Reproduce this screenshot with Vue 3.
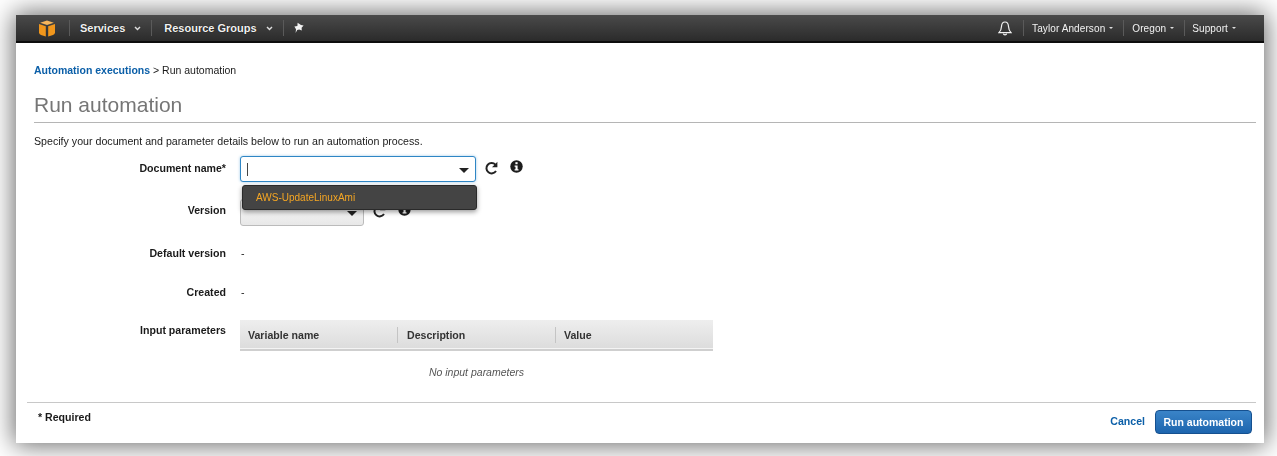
<script setup>
const navLeft = ['Services', 'Resource Groups']
const navRight = ['Taylor Anderson', 'Oregon', 'Support']
const columns = [
  { name: 'Variable name', width: 157 },
  { name: 'Description', width: 158 },
  { name: 'Value', width: 158 }
]
</script>

<template>
  <div class="stage">
    <div class="window">
      <header class="nav">
        <svg class="logo" width="18" height="17" viewBox="0 0 18 17">
          <path d="M9 .6 L15.8 2.8 L9 5 L2.2 2.8 Z" fill="#f7b65c" />
          <path d="M1 4 L7.8 6.3 V16.6 L3 15 Q1 14.3 1 12.6 Z" fill="#f0961c" />
          <path d="M17 4 L10.2 6.3 V16.6 L15 15 Q17 14.3 17 12.6 Z" fill="#f0961c" />
        </svg>
        <span class="sep first"></span>
        <template v-for="item in navLeft" :key="item">
          <span class="nav-item">{{ item }}</span>
          <svg class="chev" width="7" height="5" viewBox="0 0 7 5"><path d="M1 1 L3.5 3.6 L6 1" fill="none" stroke="#ddd" stroke-width="1.4" /></svg>
          <span class="sep"></span>
        </template>
        <svg class="pin" width="12" height="12" viewBox="0 0 12 12">
          <path d="M4.6 .8 L8 3 L10.6 3.4 L8.6 5.8 L8.8 8.6 L6.2 7.4 L4.2 8 L2.6 11 L3 7.2 L1.4 4.6 L4.4 4 Z" fill="#f2f2f2" />
        </svg>
        <div class="nav-right">
          <svg class="bell" width="14" height="15" viewBox="0 0 14 15">
            <path d="M7 1 C4.4 1 3.6 3.2 3.5 5.6 C3.4 8.2 2.8 9.8 1 11.6 H13 C11.2 9.8 10.6 8.2 10.5 5.6 C10.4 3.2 9.6 1 7 1 Z" fill="none" stroke="#f2f2f2" stroke-width="1.2" />
            <path d="M5.4 12.6 C5.6 14.3 8.4 14.3 8.6 12.6" fill="none" stroke="#f2f2f2" stroke-width="1.2" />
          </svg>
          <div v-for="item in navRight" :key="item" class="right-item">
            <span>{{ item }}</span><i class="caret"></i>
          </div>
        </div>
      </header>

      <main class="content">
        <div class="crumbs"><a>Automation executions</a> &gt; Run automation</div>
        <h1>Run automation</h1>
        <p class="intro">Specify your document and parameter details below to run an automation process.</p>

        <div class="form">
          <div class="row row-doc">
            <label>Document name*</label>
            <div class="field-wrap">
              <div class="doc-input">
                <span class="cursor"></span>
                <i class="arrow"></i>
              </div>
              <svg class="refresh" width="15" height="15" viewBox="0 0 15 15">
                <path d="M12 10 A5.2 5.2 0 1 1 11.4 3.6" fill="none" stroke="#222" stroke-width="2" />
                <path d="M13.4 .8 V6.2 H8 Z" fill="#222" />
              </svg>
              <svg class="info" width="13" height="13" viewBox="0 0 13 13">
                <circle cx="6.5" cy="6.5" r="6.2" fill="#1d1d1d" />
                <rect x="5.4" y="2.2" width="2.2" height="2" fill="#fff" />
                <path d="M4.6 5.4 H7.6 V9.2 H8.5 V10.6 H4.6 V9.2 H5.5 V6.8 H4.6 Z" fill="#fff" />
              </svg>
              <div class="menu"><span>AWS-UpdateLinuxAmi</span></div>
            </div>
          </div>

          <div class="row row-version">
            <label>Version</label>
            <div class="field-wrap">
              <div class="version-select"><i class="arrow"></i></div>
              <svg class="refresh" width="15" height="15" viewBox="0 0 15 15">
                <path d="M12 10 A5.2 5.2 0 1 1 11.4 3.6" fill="none" stroke="#222" stroke-width="2" />
                <path d="M13.4 .8 V6.2 H8 Z" fill="#222" />
              </svg>
              <svg class="info" width="13" height="13" viewBox="0 0 13 13">
                <circle cx="6.5" cy="6.5" r="6.2" fill="#1d1d1d" />
                <rect x="5.4" y="2.2" width="2.2" height="2" fill="#fff" />
                <path d="M4.6 5.4 H7.6 V9.2 H8.5 V10.6 H4.6 V9.2 H5.5 V6.8 H4.6 Z" fill="#fff" />
              </svg>
            </div>
          </div>

          <div class="row row-default"><label>Default version</label><span class="dash">-</span></div>
          <div class="row row-created"><label>Created</label><span class="dash">-</span></div>

          <div class="row row-params">
            <label>Input parameters</label>
            <div class="table">
              <div class="thead">
                <div v-for="col in columns" :key="col.name" class="th" :style="{ width: col.width + 'px' }">{{ col.name }}</div>
              </div>
              <div class="empty">No input parameters</div>
            </div>
          </div>
        </div>
      </main>

      <footer class="footer">
        <span class="required">* Required</span>
        <div class="actions">
          <a class="cancel">Cancel</a>
          <button class="run">Run automation</button>
        </div>
      </footer>
    </div>
  </div>
</template>

<style>
html, body { margin: 0; background: #fff; }
</style>

<style scoped>
.stage {
  width: 1277px;
  height: 456px;
  box-sizing: border-box;
  padding: 15px 13px 13px 16px;
  overflow: hidden;
  font-family: "Liberation Sans", Arial, sans-serif;
  color: #1a1a1a;
}
.window {
  height: 428px;
  background: #fff;
  box-shadow: 0 0 24px 2px rgba(0, 0, 0, .6);
  display: flex;
  flex-direction: column;
  filter: blur(.4px);
}
.nav {
  height: 26px;
  flex: none;
  border-bottom: 2px solid #0d0d0d;
  background: linear-gradient(#4a4a4a, #2b2b2b);
  display: flex;
  align-items: center;
  padding-left: 22px;
  color: #f2f2f2;
  font-size: 11px;
  font-weight: 700;
}
.logo { margin-top: 1px; }
.sep {
  width: 1px;
  height: 16px;
  background: #5a5a5a;
  margin: 0 12px 0 10px;
}
.sep.first { margin: 0 10px 0 13px; }
.nav-item { text-shadow: 0 0 1px #000; }
.chev { margin-left: 9px; }
.pin { margin-left: -3px; }
.nav-right {
  margin-left: auto;
  display: flex;
  align-items: center;
  font-size: 10px;
  font-weight: 400;
  padding-right: 18px;
}
.bell { margin-right: 11px; }
.right-item {
  height: 16px;
  display: flex;
  align-items: center;
  border-left: 1px solid #5a5a5a;
  padding: 0 10px 0 8px;
  letter-spacing: .1px;
}
.right-item:last-child { padding-left: 7px; }
.caret {
  width: 0;
  height: 0;
  margin-left: 4px;
  border: 2.5px solid transparent;
  border-top-color: #ddd;
  border-bottom: 0;
}
.content {
  flex: 1;
  padding: 21px 8px 0 18px;
}
.crumbs {
  font-size: 10.5px;
  line-height: 12px;
}
.crumbs a {
  color: #0b5fa8;
  font-weight: 700;
}
h1 {
  margin: 16px 0 0;
  height: 31px;
  font-size: 21px;
  line-height: 25px;
  font-weight: 400;
  color: #767676;
  border-bottom: 1px solid #b5b5b5;
  box-sizing: border-box;
}
.intro {
  margin: 12px 0 0;
  font-size: 10.65px;
  line-height: 13px;
}
.form { margin-top: 8px; }
.row {
  display: flex;
  align-items: flex-start;
  font-size: 10.6px;
}
label {
  width: 192px;
  margin-right: 14px;
  text-align: right;
  font-weight: 700;
  line-height: 13px;
}
.field-wrap {
  position: relative;
  display: flex;
  align-items: flex-start;
}
.row-doc { height: 43px; }
.row-doc label { margin-top: 6px; }
.doc-input {
  width: 234px;
  height: 24px;
  border: 1px solid #2f86c5;
  border-radius: 3px;
  box-shadow: 0 0 3px #9fc9e8;
  position: relative;
  background: #fff;
}
.cursor {
  position: absolute;
  left: 6px;
  top: 6px;
  width: 1px;
  height: 13px;
  background: #444;
}
.arrow {
  position: absolute;
  right: 6px;
  top: 11px;
  border: 5px solid transparent;
  border-top-color: #222;
  border-bottom: 0;
}
.refresh { margin: 5px 0 0 8px; }
.info { margin: 4px 0 0 11px; }
.menu {
  position: absolute;
  left: 2px;
  top: 29px;
  width: 235px;
  height: 25px;
  box-sizing: border-box;
  border-radius: 3px;
  background: #444;
  border: 1px solid #2a2a2a;
  box-shadow: 0 2px 5px rgba(0, 0, 0, .4);
  color: #f5a623;
  line-height: 23px;
  padding-left: 13px;
  font-size: 10px;
  z-index: 2;
}
.row-version { height: 48px; }
.row-version label { margin-top: 5px; }
.version-select {
  width: 122px;
  height: 25px;
  border: 1px solid #bbb;
  border-radius: 3px;
  background: linear-gradient(#fafafa, #e8e8e8);
  position: relative;
}
.row-default { height: 39px; }
.row-created { height: 39px; }
.dash { line-height: 13px; margin-left: 1px; }
.row-params { margin-top: -5px; }
.row-params label { margin-top: 4px; }
.table { width: 473px; }
.thead {
  height: 31px;
  box-sizing: border-box;
  display: flex;
  background: linear-gradient(#eeeeee, #dcdcdc);
  border-bottom: 2px solid #cfcfcf;
  box-shadow: inset 0 -1px 0 #f4f4f4;
  align-items: center;
}
.th {
  box-sizing: border-box;
  padding-left: 9px;
  font-weight: 700;
  color: #333;
  height: 16px;
  line-height: 16px;
  margin-top: 1px;
  border-left: 1px solid #c4c4c4;
}
.th:first-child { border-left: 0; padding-left: 8px; }
.th:last-child { padding-left: 8px; }
.empty {
  margin-top: 15px;
  text-align: center;
  font-style: italic;
  font-size: 10.5px;
  line-height: 13px;
  color: #555;
}
.footer {
  flex: none;
  height: 41px;
  margin: 0 8px 0 11px;
  border-top: 1px solid #c8c8c8;
  display: flex;
  justify-content: space-between;
  box-sizing: border-box;
  padding-left: 11px;
}
.required {
  font-size: 10.6px;
  font-weight: 700;
  line-height: 13px;
  margin-top: 8px;
}
.actions {
  display: flex;
  align-items: flex-start;
  padding-right: 4px;
}
.cancel {
  color: #0b5fa8;
  font-size: 10.6px;
  font-weight: 700;
  line-height: 13px;
  margin: 12px 10px 0 0;
}
.run {
  width: 97px;
  height: 24px;
  margin-top: 7px;
  padding: 0;
  border: 1px solid #15508f;
  border-radius: 4px;
  background: linear-gradient(#3a84c8, #1d65ae);
  color: #fff;
  font: 700 10.5px "Liberation Sans", Arial, sans-serif;
}
</style>
